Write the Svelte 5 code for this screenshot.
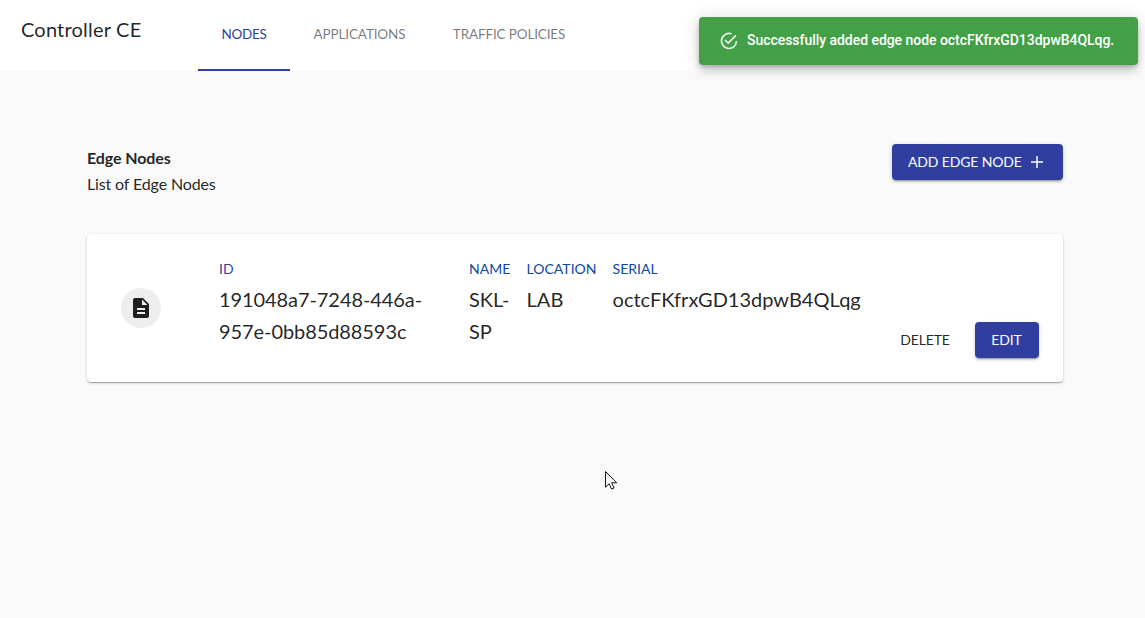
<script>
  const tabs = ['Nodes', 'Applications', 'Traffic Policies'];
  let active = $state('Nodes');
  const fields = [
    { key: 'id', label: 'ID', value: '191048a7-7248-446a-957e-0bb85d88593c' },
    { key: 'name', label: 'NAME', value: 'SKL-SP' },
    { key: 'location', label: 'LOCATION', value: 'LAB' },
    { key: 'serial', label: 'SERIAL', value: 'octcFKfrxGD13dpwB4QLqg' }
  ];
</script>

<div class="page">
  <header>
    <h1><span>Controller CE</span></h1>
    <nav>
      {#each tabs as tab}
        <button class="tab" class:active={active === tab} onclick={() => (active = tab)}><span>{tab}</span></button>
      {/each}
    </nav>
  </header>

  <main>
    <section class="heading">
      <div class="titles">
        <h2><span>Edge Nodes</span></h2>
        <p><span>List of Edge Nodes</span></p>
      </div>
      <button class="btn filled add">
        <span>Add edge node</span>
        <svg width="24" height="24" viewBox="0 0 24 24"><path d="M18 12.750h-5.250V18h-1.500v-5.250H6v-1.500h5.250V6h1.500v5.250H18z" /></svg>
      </button>
    </section>

    <article class="card">
      <div class="avatar">
        <svg width="24" height="24" viewBox="0 0 24 24"><path d="M14 2H6c-1.100 0-1.990.9-1.990 2L4 20c0 1.100.89 2 1.990 2H18c1.100 0 2-.9 2-2V8l-6-6zm2 16H8v-2h8v2zm0-4H8v-2h8v2zm-3-5V3.500L18.500 9H13z" /></svg>
      </div>
      <dl>
        {#each fields as f}
          <div class="field {f.key}">
            <dt><span>{f.label}</span></dt>
            <dd><span>{f.value}</span></dd>
          </div>
        {/each}
      </dl>
      <div class="actions">
        <button class="btn delete"><span>Delete</span></button>
        <button class="btn filled edit"><span>Edit</span></button>
      </div>
    </article>
  </main>

  <div class="toast" role="alert">
    <svg width="20" height="20" viewBox="0 0 24 24"><path d="M20 12a8 8 0 1 1-5.800-7.700l1.570-1.570A10 10 0 1 0 22 12zM7.910 10.080 6.500 11.500 11 16 21 6l-1.410-1.420L11 13.170z" /></svg>
    <span>Successfully added edge node octcFKfrxGD13dpwB4QLqg.</span>
  </div>

  <svg class="pointer" width="13" height="20" viewBox="0 0 13 20"><path d="M.5.5v15.700l3.700-3.500 2.400 5.400 2.500-1.100-2.400-5.200h5z" /></svg>
</div>

<style>
  :global(body) { background: #fafafa; }
  .page {
    min-height: 618px;
    font-family: Lato, sans-serif;
    color: rgba(0, 0, 0, 0.87);
    background: #fafafa;
  }
  h1, h2, p, dl, dt, dd { margin: 0; font-weight: 400; }
  button { font: inherit; border: 0; background: none; padding: 0; cursor: pointer; color: inherit; }
  svg { fill: currentColor; flex: none; }

  header { height: 71px; background: #fff; display: flex; }
  h1 { width: 198px; box-sizing: border-box; padding: 13px 0 0 21px; font-size: 20px; line-height: 32px; letter-spacing: 0.2px; }
  nav { display: grid; grid-template-columns: 92px 139px 160px; }
  .tab {
    box-sizing: border-box;
    padding-bottom: 2px;
    height: 71px;
    font-size: 13.5px;
    letter-spacing: -0.14px;
    line-height: 24px;
    white-space: nowrap;
    text-transform: uppercase;
    color: rgba(0, 0, 0, 0.54);
    border-bottom: 2px solid transparent;
  }
  .tab.active { color: #303f9f; border-color: #303f9f; letter-spacing: -0.35px; }

  main { padding: 73px 82px 0 87px; }
  .heading { display: flex; justify-content: space-between; height: 90px; }
  h2 { font-size: 16px; font-weight: 700; line-height: 28px; letter-spacing: -0.1px; }
  p { font-size: 16px; line-height: 24px; letter-spacing: -0.14px; }

  .btn {
    height: 36px;
    box-sizing: border-box;
    padding-bottom: 2px;
    border-radius: 4px;
    font-size: 14px;
    letter-spacing: -0.15px;
    text-transform: uppercase;
    display: flex;
    align-items: center;
    justify-content: center;
  }
  .filled {
    background: #303f9f;
    color: #fff;
    box-shadow: 0 3px 1px -2px rgba(0, 0, 0, 0.2), 0 2px 2px rgba(0, 0, 0, 0.14), 0 1px 5px rgba(0, 0, 0, 0.12);
  }
  .add { width: 171px; padding: 0 14px 2px 16px; justify-content: space-between; }
  .add svg { margin-top: 2px; }

  .card {
    height: 148px;
    box-sizing: border-box;
    background: #fff;
    border-radius: 4px;
    box-shadow: 0 1px 3px rgba(0, 0, 0, 0.2), 0 1px 1px rgba(0, 0, 0, 0.14), 0 2px 1px -1px rgba(0, 0, 0, 0.12);
    display: flex;
    padding: 24px 24px 24px 34px;
  }
  .avatar {
    width: 40px; height: 40px;
    margin-top: 30px;
    border-radius: 50%;
    background: #eee;
    display: flex; align-items: center; justify-content: center;
  }
  dl { display: flex; margin-left: 58px; flex: 1; }
  .id { width: 250px; padding-right: 16px; box-sizing: border-box; }
  .id dd { letter-spacing: -0.08px; }
  .name { width: 57.6px; }
  .location { width: 86px; }
  .name dd { width: 42px; }
  dt { font-size: 14px; line-height: 22px; color: #0d47a1; }
  .id dt { color: #303f9f; }
  dd { font-size: 20px; line-height: 32px; margin-top: 3px; }
  .actions { display: flex; align-items: flex-end; gap: 8px; }
  .delete { width: 83px; padding-right: 1px; }
  .edit { width: 64px; padding-right: 1px; }

  .toast {
    position: absolute;
    left: 699px; top: 17px;
    width: 439px; height: 48px;
    box-sizing: border-box;
    padding-left: 20px;
    display: flex; align-items: center; gap: 8px;
    border-radius: 4px;
    background: #43a047;
    color: #fff;
    font: 500 14px/20px Roboto, sans-serif;
    letter-spacing: -0.04px;
    white-space: nowrap;
    box-shadow: 0 3px 5px -1px rgba(0, 0, 0, 0.2), 0 6px 10px rgba(0, 0, 0, 0.14), 0 1px 18px rgba(0, 0, 0, 0.12);
  }
  .toast svg { opacity: 0.9; }
  .toast span { margin-top: -2px; }
  .pointer { position: absolute; left: 605px; top: 471px; }
  .pointer path { fill: #fff; stroke: #111; stroke-width: 1; }
</style>
